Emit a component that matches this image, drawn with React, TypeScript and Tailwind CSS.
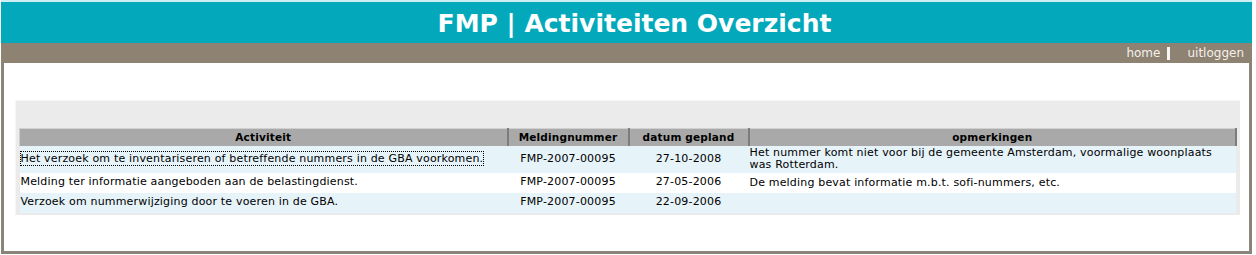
const rows = [
  {
    activiteit: "Het verzoek om te inventariseren of betreffende nummers in de GBA voorkomen.",
    nummer: "FMP-2007-00095",
    datum: "27-10-2008",
    opmerkingen: "Het nummer komt niet voor bij de gemeente Amsterdam, voormalige woonplaats was Rotterdam.",
    focus: true,
  },
  {
    activiteit: "Melding ter informatie aangeboden aan de belastingdienst.",
    nummer: "FMP-2007-00095",
    datum: "27-05-2006",
    opmerkingen: "De melding bevat informatie m.b.t. sofi-nummers, etc.",
  },
  {
    activiteit: "Verzoek om nummerwijziging door te voeren in de GBA.",
    nummer: "FMP-2007-00095",
    datum: "22-09-2006",
    opmerkingen: "",
  },
];

const headerCell =
  "h-[17px] p-0 bg-[#a9a9a9] border-t border-l border-t-[#d0d0d0] border-l-[#d0d0d0] border-r-2 border-r-[#7c7c7c] text-center font-bold text-[10.5px] leading-[15px] text-black";

const App = () => {
  return (
    <div className="w-[1256px] h-[255px] bg-white font-['DejaVu_Sans',sans-serif]">
      <div className="ml-[1px] w-[1251px] h-[254px] flex flex-col">
        <header className="h-[43px] bg-[#03a9bb] border-t-2 border-t-[#cdeff3] flex items-center justify-center">
          <h1 className="text-white font-bold text-[25px] leading-none ml-[16px] mt-[1px]">
            FMP | Activiteiten Overzicht
          </h1>
        </header>
        <nav className="h-[20px] bg-[#8e8272] flex items-center justify-end pr-[8px] text-[12px] text-[#f4f1ec]">
          <a className="leading-none">home</a>
          <span className="mx-[7px] w-[3px] h-[13px] bg-[#f7f5f2]" />
          <a className="ml-[10px] leading-none">uitloggen</a>
        </nav>
        <main className="flex-1 border-l-[3px] border-r-[3px] border-b-[3px] border-[#8a847b] pl-[11px] pr-[9px] pt-[37px]">
          <div className="bg-[#ebebeb] border-t border-l border-[#f6f6f6] pt-[27px] pl-[3px] pr-[3px] pb-[2px]">
            <table className="w-full border-collapse table-fixed text-[11px] tracking-[0.18px] text-black">
              <colgroup>
                <col className="w-[488px]" />
                <col className="w-[121px]" />
                <col className="w-[120px]" />
                <col />
              </colgroup>
              <thead>
                <tr>
                  <th className={headerCell}>Activiteit</th>
                  <th className={headerCell}>Meldingnummer</th>
                  <th className={headerCell}>datum gepland</th>
                  <th className={headerCell}>opmerkingen</th>
                </tr>
              </thead>
              <tbody>
                {rows.map((row, i) => (
                  <tr key={i} className={i % 2 === 0 ? "bg-[#e6f3f9]" : "bg-white"}>
                    <td className={`p-0 pl-[1px] align-middle whitespace-nowrap ${i === 0 ? "h-[27px]" : "h-[20px]"}`}>
                      <a className={row.focus ? "outline outline-1 outline-dotted outline-black" : ""}>
                        {row.activiteit}
                      </a>
                    </td>
                    <td className="p-0 text-center align-middle">{row.nummer}</td>
                    <td className="p-0 text-center align-middle">{row.datum}</td>
                    <td className="p-0 pl-[1px] pr-[14px] align-middle leading-[12px]">{row.opmerkingen}</td>
                  </tr>
                ))}
              </tbody>
            </table>
          </div>
        </main>
      </div>
    </div>
  );
};

export default App;
